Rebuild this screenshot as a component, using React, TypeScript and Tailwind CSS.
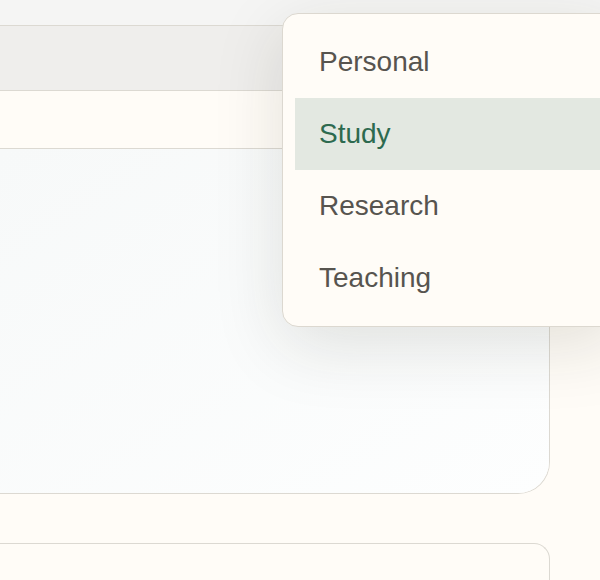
const items = ["Personal", "Study", "Research", "Teaching"];
const active = "Study";

export default function App() {
  return (
    <div className="relative h-[580px] w-[600px] overflow-hidden bg-[#fffcf7] font-['Liberation_Sans',Arial,sans-serif]">
      <div className="h-[25px] bg-[#f5f5f4]" />

      <div className="w-[550px] border-t border-r border-b border-[#dcd9d2] rounded-br-[32px] overflow-hidden">
        <div className="h-[65px] bg-[#efeeec] border-b border-[#dcd9d2]" />
        <div className="h-[58px] bg-[#fffcf7] border-b border-[#dcd9d2]" />
        <div className="h-[344px] bg-gradient-to-br from-[#f7f9f9] to-[#fdfefe]" />
      </div>

      <div className="mt-[49px] h-[60px] w-[550px] border-t border-r border-[#dcd9d2] rounded-tr-[16px] bg-[#fffcf7]" />

      <div className="absolute left-[282px] top-[13px] w-[340px] rounded-[16px] border border-[#dcd8d0] bg-[#fffcf7] p-3 shadow-[0_18px_70px_rgba(40,35,25,0.13)]">
        {items.map((label) => (
          <div
            key={label}
            className={`flex h-[72px] items-center px-6 text-[28px] ${
              label === active ? "bg-[#e3e8e1] text-[#2d6a4f]" : "text-[#57544f]"
            }`}
          >
            {label}
          </div>
        ))}
      </div>
    </div>
  );
}
